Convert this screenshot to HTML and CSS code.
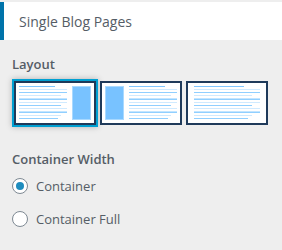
FILE: index.html
```html
<!DOCTYPE html>
<html>
<head>
<meta charset="utf-8">
<link rel="stylesheet" href="styles.css">
</head>
<body>
<div class="header">Single Blog Pages</div>
<div class="panel">
  <div class="label">Layout</div>
  <div class="thumbs">
    <div class="thumb selected">
      <div class="content">
        <div class="title"></div>
        <div class="line a"></div><div class="line b"></div><div class="line a w2"></div><div class="line b"></div>
        <div class="line a"></div><div class="line b w2"></div><div class="line a"></div><div class="line b"></div>
        <div class="line a w2"></div><div class="line b w3"></div>
      </div>
      <div class="sidebar"></div>
    </div>
    <div class="thumb">
      <div class="sidebar"></div>
      <div class="content">
        <div class="title"></div>
        <div class="line a"></div><div class="line b"></div><div class="line a w2"></div><div class="line b"></div>
        <div class="line a"></div><div class="line b w2"></div><div class="line a"></div><div class="line b"></div>
        <div class="line a w2"></div><div class="line b w3"></div>
      </div>
    </div>
    <div class="thumb">
      <div class="content full">
        <div class="title"></div>
        <div class="line a"></div><div class="line b"></div><div class="line a w2"></div><div class="line b"></div>
        <div class="line a"></div><div class="line b w2"></div><div class="line a"></div><div class="line b"></div>
        <div class="line a w2"></div><div class="line b w3"></div>
      </div>
    </div>
  </div>
  <div class="label second">Container Width</div>
  <div class="radios">
    <label class="radio"><span class="circle checked"></span><span>Container</span></label>
    <label class="radio"><span class="circle"></span><span>Container Full</span></label>
  </div>
</div>
</body>
</html>
```
FILE: styles.css
```css
html, body {
  margin: 0;
  padding: 0;
  background: #eeeeee;
  font-family: "Open Sans", "Noto Sans", sans-serif;
  color: #555d66;
}
.header {
  margin-top: 2px;
  height: 38px;
  background: #fff;
  border-left: 4px solid #0073aa;
  padding-left: 15px;
  display: flex;
  align-items: center;
  font-size: 14px;
}
.panel {
  padding: 14px 12px 0 12px;
}
.label {
  font-size: 13px;
  font-weight: 600;
  line-height: 20px;
}
.label.second {
  margin-top: 24px;
}
.thumbs {
  display: flex;
  gap: 4px;
  margin-top: 7px;
  padding-left: 2px;
}
.thumb {
  box-sizing: border-box;
  width: 82px;
  height: 44px;
  border: 2px solid #1f3a5a;
  background: #fff;
  padding: 2px 3px;
  display: flex;
  gap: 5px;
}
.thumb.selected {
  box-shadow: 0 0 0 2px #00a0d2, 0 0 6px 2px rgba(0,0,0,0.25);
}
.content {
  flex: 1;
  display: flex;
  flex-direction: column;
  padding-top: 1px;
}
.content.full {
  padding-left: 3px;
  padding-right: 3px;
}
.title {
  width: 75%;
  height: 3px;
  background: #7fc6ff;
  margin-bottom: 2px;
}
.line {
  height: 1px;
  margin-bottom: 2px;
  width: 100%;
}
.line.a { background: #9fd5ff; border-bottom: 1px solid #cfeaff; }
.line.b { background: #c3e5ff; border-bottom: 1px solid #90cfff; }
.line.w2 { width: 88%; }
.line.w3 { width: 82%; }
.sidebar {
  width: 19px;
  box-sizing: border-box;
  background: #78c2ff;
  border: 1px solid #a9d9ff;
  margin-top: 1px;
  margin-bottom: 1px;
}
.radios {
  display: flex;
  flex-direction: column;
  gap: 11px;
  margin-top: 6px;
}
.radio {
  display: flex;
  align-items: center;
  gap: 8px;
  height: 22px;
  font-size: 13px;
}
.circle {
  box-sizing: border-box;
  width: 16px;
  height: 16px;
  border-radius: 50%;
  border: 1px solid #7e8993;
  background: #fff;
  display: flex;
  align-items: center;
  justify-content: center;
}
.circle.checked::after {
  content: "";
  width: 8px;
  height: 8px;
  border-radius: 50%;
  background: #1e8cbe;
}
```
